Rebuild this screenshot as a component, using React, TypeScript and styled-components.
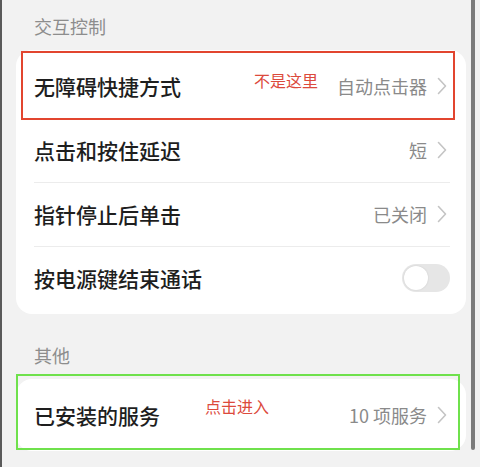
import React from "react";
import styled, { createGlobalStyle } from "styled-components";

const GlobalStyle = createGlobalStyle`
	html, body {
		margin: 0;
		padding: 0;
		background: #f2f2f2;
	}
	body {
		font-family: "Noto Sans CJK SC", "Noto Sans", sans-serif;
	}
`;

type Item = {
	title: string;
	value?: string;
	toggle?: boolean;
};

const controls: Item[] = [
	{ title: "无障碍快捷方式", value: "自动点击器" },
	{ title: "点击和按住延迟", value: "短" },
	{ title: "指针停止后单击", value: "已关闭" },
	{ title: "按电源键结束通话", toggle: true },
];

function Chevron() {
	return (
		<ChevronIcon width="10" height="18" viewBox="0 0 10 18">
			<path d="M1.5 1.5 L8.5 9 L1.5 16.5" fill="none" stroke="#c4c4c4" strokeWidth="1.6" strokeLinecap="round" strokeLinejoin="round" />
		</ChevronIcon>
	);
}

function SettingRow({ item }: { item: Item }) {
	return (
		<Row>
			<div className="title">{item.title}</div>
			{item.toggle ? (
				<Switch>
					<span />
				</Switch>
			) : (
				<div className="right">
					<span className="value">{item.value}</span>
					<Chevron />
				</div>
			)}
		</Row>
	);
}

export default function App() {
	return (
		<>
			<GlobalStyle />
			<Page>
				<Content>
					<SectionTitle $top={14}>交互控制</SectionTitle>
					<Card>
						{controls.map((item) => (
							<SettingRow key={item.title} item={item} />
						))}
						<Annotation $color="#e2452f" $left={5} $top={1} $width={434} $height={69}>
							<Note $left={231} $top={17}>不是这里</Note>
						</Annotation>
					</Card>

					<SectionTitle $top={29}>其他</SectionTitle>
					<Card>
						<SettingRow item={{ title: "已安装的服务", value: "10 项服务" }} />
						<Annotation $color="#6fe14c" $left={0} $top={-5} $width={444} $height={76}>
							<Note $left={187} $top={20}>点击进入</Note>
						</Annotation>
					</Card>
				</Content>
				<ScrollTrack>
					<div className="thumb" />
				</ScrollTrack>
			</Page>
		</>
	);
}

const Page = styled.div`
	display: flex;
	height: 467px;
	overflow: hidden;
	background: #f2f2f2;
	border-left: 2px solid #5a5a5a;
	box-sizing: border-box;
`;

const Content = styled.div`
	width: 469px;
	padding: 0 5px 0 14px;
	box-sizing: border-box;
`;

const SectionTitle = styled.div<{ $top: number }>`
	padding: ${(p) => p.$top}px 18px 12px;
	font-size: 18px;
	line-height: 24px;
	color: #8d8d8d;
`;

const Card = styled.div`
	position: relative;
	background: #ffffff;
	border-radius: 16px;
	padding: 4px 0;
`;

const Row = styled.div`
	position: relative;
	display: flex;
	align-items: center;
	justify-content: space-between;
	height: 64px;
	padding: 0 16px 0 18px;

	& + &::before {
		content: "";
		position: absolute;
		top: 0;
		left: 18px;
		right: 16px;
		height: 1px;
		background: #ececec;
	}

	.title {
		font-size: 21px;
		font-weight: 500;
		color: #1e1e1e;
	}

	.right {
		display: flex;
		align-items: center;
		gap: 10px;
		padding-right: 3px;
	}

	.value {
		font-size: 18px;
		color: #8a8a8a;
	}
`;

const ChevronIcon = styled.svg`
	display: block;
`;

const Switch = styled.div`
	width: 48px;
	height: 28px;
	border-radius: 14px;
	background: #e6e6e6;
	padding: 2px;
	box-sizing: border-box;

	span {
		display: block;
		width: 24px;
		height: 24px;
		border-radius: 50%;
		background: #ffffff;
		box-shadow: 0 0 2px rgba(0, 0, 0, 0.12);
	}
`;

const Annotation = styled.div<{ $color: string; $left: number; $top: number; $width: number; $height: number }>`
	position: absolute;
	left: ${(p) => p.$left}px;
	top: ${(p) => p.$top}px;
	width: ${(p) => p.$width}px;
	height: ${(p) => p.$height}px;
	border: 2.5px solid ${(p) => p.$color};
	box-sizing: border-box;
	pointer-events: none;
`;

const Note = styled.div<{ $left: number; $top: number }>`
	position: absolute;
	left: ${(p) => p.$left}px;
	top: ${(p) => p.$top}px;
	font-size: 16px;
	line-height: 20px;
	color: #dc4a3c;
	white-space: nowrap;
`;

const ScrollTrack = styled.div`
	width: 9px;
	display: flex;
	justify-content: flex-start;

	.thumb {
		width: 4px;
		height: 450px;
		background: #7c7c7c;
		border-radius: 0 0 2px 2px;
	}
`;
